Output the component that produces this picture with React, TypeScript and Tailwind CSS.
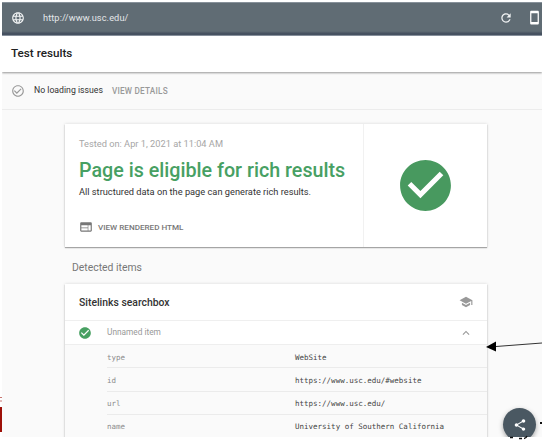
import type { ReactNode } from 'react';
import {
  MdCheckCircle,
  MdCheckCircleOutline,
  MdExpandLess,
  MdLanguage,
  MdRefresh,
  MdSchool,
  MdShare,
  MdStayCurrentPortrait,
  MdWeb,
} from 'react-icons/md';

const properties = [
  { name: 'type', value: 'WebSite' },
  { name: 'id', value: 'https://www.usc.edu/#website' },
  { name: 'url', value: 'https://www.usc.edu/' },
  { name: 'name', value: 'University of Southern California' },
];

function TopBar() {
  return (
    <header className="flex h-[34px] shrink-0 items-center border-y border-t-[#87919a] border-b-[#8a94a0] bg-[#606c74] bg-linear-to-b from-[#606c74] from-88% to-[#465160] to-95% pl-[9px] text-[#e4e7e9]">
      <MdLanguage className="mb-[3px] size-[14px] text-[#f2f4f5]" />
      <span className="ml-[18px] flex-1 pb-[2px] text-[9.2px] tracking-[0.1px]">http://www.usc.edu/</span>
      <MdRefresh className="mr-[14px] mb-[3px] size-[14px] text-[#f2f4f5]" />
      <MdStayCurrentPortrait className="mb-[3px] size-[15px] shrink-0 text-white" />
    </header>
  );
}

function Card({ className, children }: { className: string; children: ReactNode }) {
  return (
    <section className={`ml-[63px] w-[422px] bg-white shadow-[0_1px_1px_rgba(0,0,0,0.3),0_0_3px_rgba(0,0,0,0.14)] ${className}`}>
      {children}
    </section>
  );
}

function ResultCard() {
  return (
    <Card className="mt-[14px] flex h-[123px] shrink-0">
      <div className="flex w-[299px] flex-col border-r border-[#f1f1f1] pl-[14px] whitespace-nowrap">
        <p className="mt-[14px] text-[9.25px] leading-[12px] text-[#a6a6a6]">Tested on: Apr 1, 2021 at 11:04 AM</p>
        <h1 className="mt-[9px] text-[19.7px] leading-[24px] font-medium text-[#47a063]">
          Page is eligible for rich results
        </h1>
        <p className="mt-[2px] text-[9.25px] leading-[14px] text-[#333]">
          All structured data on the page can generate rich results.
        </p>
        <div className="mt-[21px] flex items-center gap-[5px] text-[8.1px] leading-[14px] font-medium text-[#777]">
          <MdWeb className="size-[14px]" />
          VIEW RENDERED HTML
        </div>
      </div>
      <div className="flex flex-1 items-center justify-center">
        <MdCheckCircle className="size-[61px] text-[#48995f]" />
      </div>
    </Card>
  );
}

function ItemsCard() {
  return (
    <Card className="mt-[10px] h-[170px] shrink-0">
      <div className="flex h-[37px] items-center justify-between border-b border-[#efefef] pr-[14px] pl-[14px]">
        <h2 className="pt-px text-[10.4px] font-medium text-[#333]">Sitelinks searchbox</h2>
        <MdSchool className="size-[14px] text-[#999]" />
      </div>
      <div className="flex h-[23px] items-center pr-[14px] pl-[13px]">
        <MdCheckCircle className="size-[14px] text-[#48a062]" />
        <span className="ml-[15px] flex-1 text-[8.3px] text-[#999]">Unnamed item</span>
        <MdExpandLess className="size-[14px] text-[#999]" />
      </div>
      <dl className="h-[110px] border-t border-[#eee] bg-[#fafafa] pl-[42px] font-['DejaVu_Sans_Mono',monospace] text-[7.5px]">
        {properties.map((property) => (
          <div key={property.name} className="flex h-[23.3px] items-center border-b border-[#ebebeb] pt-[2px]">
            <dt className="w-[188px] text-[#8b8b8b]">{property.name}</dt>
            <dd className="text-[#444]">{property.value}</dd>
          </div>
        ))}
      </dl>
    </Card>
  );
}

export default function App() {
  return (
    <div className="relative h-[440px] w-[542px] overflow-hidden bg-white pt-[2px] pl-[2px] font-[Roboto,sans-serif]">
      <main className="flex h-[435px] w-[540px] flex-col overflow-hidden bg-[#fafafa]">
        <TopBar />
        <div className="relative flex h-[36px] shrink-0 items-center bg-white pl-[9px] shadow-[0_1px_2px_rgba(0,0,0,0.4)]">
          <h2 className="text-[11.7px] font-medium text-[#222]">Test results</h2>
        </div>
        <div className="flex h-[38px] shrink-0 items-center border-b border-[#ececec] pl-[9px]">
          <MdCheckCircleOutline className="size-[14px] text-[#999]" />
          <span className="ml-[9px] pt-px text-[8.7px] text-[#333]">No loading issues</span>
          <button className="ml-[9px] pt-px text-[8.2px] font-medium tracking-[0.22px] text-[#999]">VIEW DETAILS</button>
        </div>
        <div className="shrink-0">
          <ResultCard />
          <h3 className="mt-[14px] ml-[70px] text-[10.4px] leading-[13px] text-[#777]">Detected items</h3>
          <ItemsCard />
        </div>
      </main>

      {/* Callout arrow and page fragments lying over the screen edge */}
      <svg className="absolute inset-0" width="542" height="440" viewBox="0 0 542 440">
        <path d="M496 346.5 542 343" stroke="#333" strokeWidth="1" />
        <path d="M486 347 496 341.5V351.5Z" fill="#000" />
        <path d="M0 397.5H2M0 401H2" stroke="#c77772" strokeWidth="1" />
        <path d="M0 407H2V432H0Z" fill="#9d1008" />
      </svg>
      <button className="absolute top-[408px] left-[503px] flex size-[33px] items-center justify-center rounded-full bg-[#4a5862] text-white shadow-[0_2px_5px_rgba(0,0,0,0.35)]">
        <MdShare className="size-[14px]" />
      </button>
      <svg className="absolute bottom-0 left-[500px]" width="42" height="20" viewBox="500 420 42 20">
        <path d="M500 437H542V440H500Z" fill="#fff" />
        <path d="M510 437.5H513M519 438.5H522M524 438.5Q526 438.5 527 436" fill="none" stroke="#111" strokeWidth="1.5" />
        <path d="M540 423H542" stroke="#111" strokeWidth="2" />
      </svg>
    </div>
  );
}
